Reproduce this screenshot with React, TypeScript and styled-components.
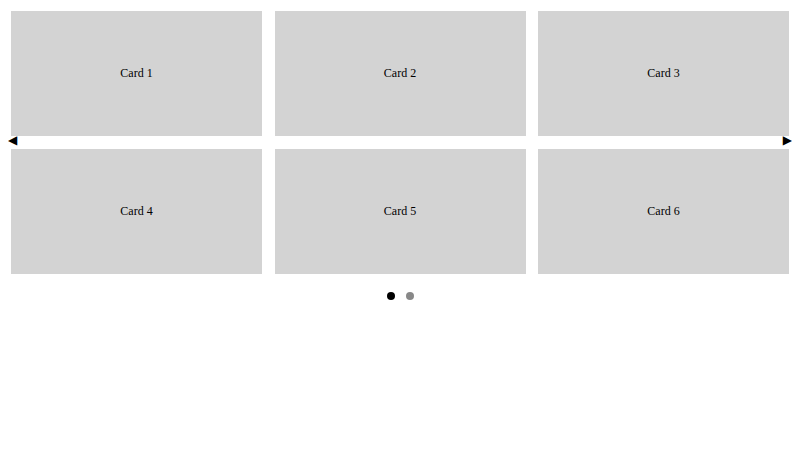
import React, { useState } from "react";
import styled, { createGlobalStyle } from "styled-components";

const Global = createGlobalStyle`
  body {
    margin: 8px;
    background: #ffffff;
    font-family: "Liberation Serif", "Times New Roman", serif;
    color: #000;
  }
`;

const Carousel = styled.div`
  position: relative;
  padding: 3px 3px 0;
`;

const Grid = styled.div`
  display: grid;
  grid-template-columns: repeat(3, 251px);
  justify-content: space-between;
  row-gap: 13px;
`;

const Card = styled.div`
  height: 125px;
  background: #d3d3d3;
  display: flex;
  align-items: center;
  justify-content: center;
  font-size: 12px;
`;

const Arrow = styled.button<{ $side: "left" | "right" }>`
  position: absolute;
  top: 50%;
  ${(p) => (p.$side === "left" ? "left: 0;" : "right: 0;")}
  transform: translateY(-50%);
  margin-top: -1px;
  background: none;
  border: none;
  padding: 0;
  font-size: 12px;
  line-height: 1;
  color: #000;
  cursor: pointer;
  font-family: "DejaVu Sans", sans-serif;
`;

const Dots = styled.div`
  display: flex;
  justify-content: center;
  gap: 11px;
  margin-top: 18px;
`;

const Dot = styled.span<{ $active: boolean }>`
  width: 8px;
  height: 8px;
  border-radius: 50%;
  background: ${(p) => (p.$active ? "#000" : "#888")};
`;

const cards = ["Card 1", "Card 2", "Card 3", "Card 4", "Card 5", "Card 6"];

export default function App() {
  const [page, setPage] = useState(0);
  return (
    <>
      <Global />
      <Carousel>
        <Grid>
          {cards.map((c) => (
            <Card key={c}>{c}</Card>
          ))}
        </Grid>
        <Arrow $side="left" onClick={() => setPage(0)}>◀</Arrow>
        <Arrow $side="right" onClick={() => setPage(1)}>▶</Arrow>
      </Carousel>
      <Dots>
        {[0, 1].map((i) => (
          <Dot key={i} $active={page === i} />
        ))}
      </Dots>
    </>
  );
}
